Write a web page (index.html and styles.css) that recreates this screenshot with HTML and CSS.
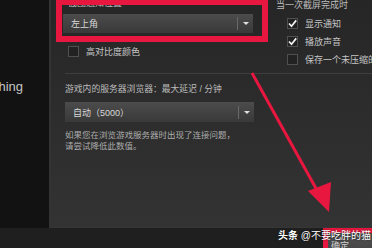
FILE: index.html
```html
<!DOCTYPE html>
<html lang="zh-CN">
<head>
  <meta charset="UTF-8" />
  <meta name="viewport" content="width=device-width, initial-scale=1.0"/>
  <title>设置 - 游戏中</title>
  <link rel="stylesheet" href="styles.css">
</head>
<body>
  <div class="window">
    <div class="main">
      <nav class="sidebar">
        <div class="nav-item">Watching</div>
      </nav>

      <section class="panel">
        <div class="top-row">
          <div class="col-left">
            <div class="label label-cut">截图通知位置</div>
            <div class="select select-first"><span class="select-value">左上角</span><span class="select-arrow"></span></div>
            <label class="check check-indent"><span class="box"></span>高对比度颜色</label>
          </div>
          <div class="col-right">
            <div class="label">当一次截屏完成时</div>
            <label class="check"><span class="box"><svg viewBox="0 0 11 11"><polyline points="2,5.5 4.5,8.2 9.2,2.4"/></svg></span>显示通知</label>
            <label class="check"><span class="box"><svg viewBox="0 0 11 11"><polyline points="2,5.5 4.5,8.2 9.2,2.4"/></svg></span>播放声音</label>
            <label class="check"><span class="box"></span>保存一个未压缩的副本</label>
          </div>
        </div>

        <hr class="divider">

        <div class="col-left">
          <div class="label label-server">游戏内的服务器浏览器：最大延迟 / 分钟</div>
          <div class="select select-second"><span class="select-value">自动（5000）</span><span class="select-arrow"></span></div>
          <p class="help">如果您在浏览游戏服务器时出现了连接问题，<br>请尝试降低此数值。</p>
        </div>
      </section>
    </div>

    <footer class="footer">
      <button class="btn">确定</button>
    </footer>
  </div>

  <!-- red annotations drawn over the screenshot -->
  <div class="mark mark-select"></div>
  <div class="mark mark-ok"></div>
  <svg class="mark-arrow" width="372" height="248" viewBox="0 0 372 248">
    <line x1="252" y1="73" x2="318" y2="192"/>
    <polygon points="308,191 331,182 329,212"/>
  </svg>
  <div class="watermark"><b>头条</b> @不要吃胖的猫</div>
</body>
</html>
```

FILE: styles.css
```css
:root {
  --red: #e8173f;
  --text: #c2c2c2;
  --muted: #acacac;
  --sidebar: #121212;
  --footer: #1f1f1f;
}

* {
  margin: 0;
  padding: 0;
  box-sizing: border-box;
}

body {
  width: 372px;
  height: 248px;
  overflow: hidden;
  position: relative;
  background: var(--footer);
  font-family: 'Liberation Sans', 'Noto Sans CJK SC', sans-serif;
  color: var(--text);
}

.window {
  display: flex;
  flex-direction: column;
  height: 248px;
}

.main {
  display: flex;
  height: 228px;
}

.sidebar {
  width: 49px;
  background: var(--sidebar);
  overflow: hidden;
}

.nav-item {
  display: flex;
  justify-content: flex-end;
  padding-right: 26px;
  margin-top: 79px;
  font-size: 13px;
  line-height: 16px;
  white-space: nowrap;
  color: #c4c4c4;
}

.panel {
  flex: 1;
  background: linear-gradient(#262626, #333333);
  border-left: 2px solid #333;
  border-bottom: 1px solid #363636;
  padding-left: 14px;
  overflow: hidden;
}

.top-row {
  display: flex;
  margin-top: -1px;
}

.col-left {
  width: 189px;
  display: flex;
  flex-direction: column;
}

.col-right {
  margin-left: 22px;
  display: flex;
  flex-direction: column;
  gap: 7px;
  white-space: nowrap;
}

.label {
  font-size: 9px;
  line-height: 12px;
  color: #bcbcbc;
  white-space: nowrap;
}

.label-cut {
  margin-top: -2px;
  padding-left: 3px;
}

.col-right .label {
  padding-left: 1px;
}

.select {
  display: flex;
  align-items: center;
  height: 19px;
  background: linear-gradient(#4c4c4c, #393939);
  font-size: 9px;
  color: #d8d8d8;
}

.select-first {
  margin-top: 5px;
  margin-left: -2px;
  width: 190px;
}

.select-second {
  margin-top: 7px;
  height: 20px;
}

.select-value {
  flex: 1;
  padding-left: 8px;
}

.select-arrow {
  width: 16px;
  height: 13px;
  border-left: 1px solid #686868;
  position: relative;
}

.select-arrow::after {
  content: '';
  position: absolute;
  left: 5px;
  top: 5px;
  border-left: 3px solid transparent;
  border-right: 3px solid transparent;
  border-top: 3px solid #e0e0e0;
}

.check {
  display: flex;
  align-items: center;
  gap: 7px;
  height: 11px;
  font-size: 9px;
  color: #c6c6c6;
}

.check-indent {
  margin-top: 13px;
  margin-left: 3px;
}

.box {
  width: 11px;
  height: 11px;
  border: 1px solid #505050;
  background: #222;
  display: flex;
}

.box svg {
  width: 11px;
  height: 11px;
  margin: -1px;
}

.box polyline {
  fill: none;
  stroke: #f2f2f2;
  stroke-width: 1.7;
}

.col-right .check {
  padding-left: 12px;
}

.divider {
  border: 0;
  border-top: 1px solid #3e3e3e;
  margin-top: 8px;
}

.label-server {
  margin-top: 9px;
  font-size: 8.8px;
}

.help {
  margin-top: 8px;
  font-size: 8.5px;
  line-height: 11px;
  color: var(--muted);
  white-space: nowrap;
}

.footer {
  height: 20px;
  display: flex;
  justify-content: flex-end;
  padding-top: 5px;
}

.btn {
  width: 60px;
  margin-right: -16px;
  border: 0;
  background: linear-gradient(#505050, #444);
  color: #d0d0d0;
  font-family: inherit;
  font-size: 9px;
  text-align: left;
  padding: 5px 0 0 3px;
  line-height: 10px;
  align-self: flex-start;
  height: 20px;
}

.mark {
  position: absolute;
  border: 5px solid var(--red);
}

.mark-select {
  left: 56px;
  top: -1px;
  width: 212px;
  height: 43px;
  border-width: 6px;
}

.mark-ok {
  left: 323px;
  top: 228px;
  width: 60px;
  height: 30px;
}

.mark-arrow {
  position: absolute;
  left: 0;
  top: 0;
}

.mark-arrow line {
  stroke: var(--red);
  stroke-width: 3;
}

.mark-arrow polygon {
  fill: var(--red);
}

.watermark {
  position: absolute;
  left: 278px;
  top: 229px;
  font-size: 10px;
  line-height: 13px;
  color: #fff;
  white-space: nowrap;
  text-shadow: 0 0 2px rgba(0, 0, 0, 0.7);
}
```
